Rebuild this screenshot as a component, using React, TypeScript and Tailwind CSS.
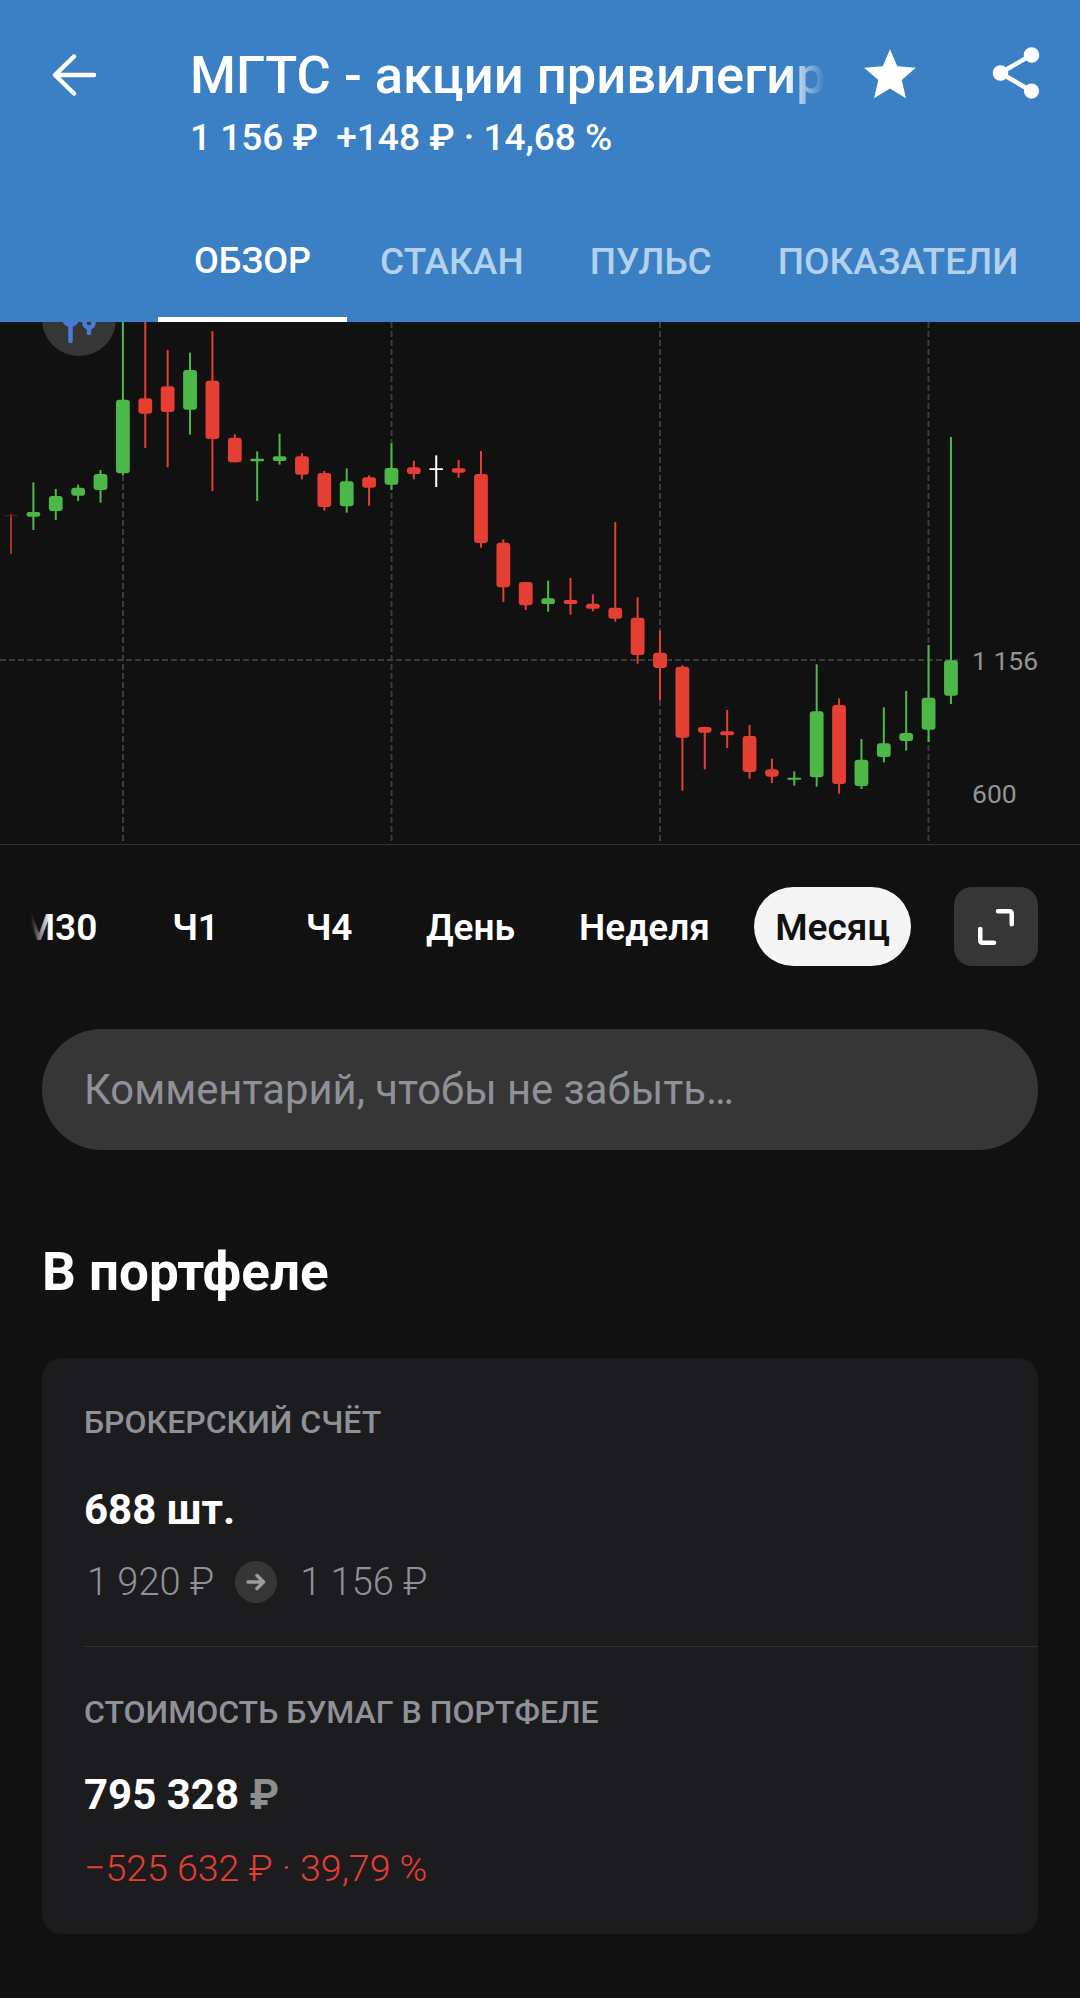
import { MdShare, MdStar } from "react-icons/md";

const R = "#E53E33";
const G = "#4CB848";
const W = "#FFFFFF";
const D = "#A8302A";

// [wick top, wick bottom, body top, body bottom, colour] in page pixels
const a = (z: number) => 310 + z / 3;
const b = (z: number) => 560 + z / 3;
const candles: [number, number, number, number, string][] = [
  [a(612), a(732), a(616), a(619), "#5A2320"],
  [a(517), a(660), a(606), a(620), G],
  [a(537), a(630), a(558), a(603), G],
  [a(524), a(573), a(533), a(557), G],
  [a(480), a(578), a(492), a(540), G],
  [a(30), a(495), a(269), a(490), G],
  [a(30), a(414), a(265), a(311), R],
  [a(120), a(472), a(229), a(306), R],
  [a(128), a(374), a(180), a(299), G],
  [a(64), a(543), a(212), a(387), R],
  [a(373), a(457), a(383), a(457), R],
  [a(424), a(573), a(446), a(454), G],
  [a(371), a(464), a(439), a(453), G],
  [a(430), a(508), a(439), a(494), R],
  [a(483), a(602), a(489), a(591), R],
  [a(475), a(608), a(514), a(589), G],
  [a(496), a(587), a(502), a(533), R],
  [a(400), a(540), a(474), a(524), G],
  [a(452), a(508), a(472), a(492), R],
  [a(436), a(531), a(475), a(480), W],
  [a(450), a(503), a(475), a(488), R],
  [a(423), a(713), a(492), a(699), R],
  [a(688), a(876), a(698), a(832), R],
  [a(816), b(150), a(816), b(136), R],
  [b(62), b(155), b(115), b(132), G],
  [b(54), b(164), b(120), b(132), R],
  [b(103), b(154), b(131), b(146), R],
  [b(-114), b(185), b(143), b(176), R],
  [b(112), b(311), b(173), b(285), R],
  [b(212), b(420), b(278), b(324), R],
  [b(316), b(692), b(320), b(533), R],
  [b(500), b(628), b(501), b(518), R],
  [b(450), b(564), b(514), b(526), R],
  [b(495), b(656), b(528), b(636), R],
  [b(596), b(669), b(628), b(650), R],
  [b(634), b(677), b(653), b(659), G],
  [b(313), b(680), b(454), b(652), G],
  [b(415), b(701), b(435), b(672), R],
  [b(537), b(687), b(599), b(678), G],
  [b(442), b(607), b(550), b(591), G],
  [b(393), b(572), b(519), b(543), G],
  [b(255), b(546), b(413), b(509), G],
  [b(-369), b(432), b(301), b(407), G],
];

const TOP = 322;

function Chart() {
  return (
    <div className="relative h-[523px] border-b border-[#333333]">
      <svg width="1080" height="522" viewBox="0 0 1080 522" className="block">
        {[123, 391.5, 660, 928.5].map((x) => (
          <line key={x} x1={x} x2={x} y1={0} y2={522} stroke="#3C3C3C" strokeWidth="2" strokeDasharray="6 3" />
        ))}
        <line x1={0} x2={958} y1={338} y2={338} stroke="#3C3C3C" strokeWidth="2" strokeDasharray="6 3" />
        <circle cx={79} cy={-3} r={37} fill="#363636" />
        <g stroke="#4A7BDC" strokeWidth="4.5" strokeLinecap="round" fill="none">
          <line x1={70.5} x2={70.5} y1={0} y2={19} />
          <circle cx={70.5} cy={-3} r={6} />
          <line x1={89} x2={89} y1={6} y2={11} />
          <circle cx={89} cy={1} r={4.5} />
        </g>
        {candles.map(([wt, wb, bt, bb, c], i) => {
          const x = 11 + i * 22.38;
          return (
            <g key={i}>
              <rect x={x - 1} y={wt - TOP} width={2} height={wb - wt} fill={i === 0 ? D : c} />
              <rect x={x - 6.9} y={bt - TOP} width={13.8} height={bb - bt} rx={bb - bt < 8 ? (bb - bt) / 2 : 3} fill={c} />
            </g>
          );
        })}
      </svg>
      <span className="absolute left-[972px] top-[322px] text-[26.5px] leading-[34px] text-[#949494]">1 156</span>
      <span className="absolute left-[972px] top-[455px] text-[26.5px] leading-[34px] text-[#949494]">600</span>
    </div>
  );
}

const frames = [
  { t: "М30", c: "w-[134px] pr-[14px]" },
  { t: "Ч1", c: "w-[123px]" },
  { t: "Ч4", c: "w-[144px]" },
  { t: "День", c: "w-[139px]" },
  { t: "Неделя", c: "w-[209px]" },
];

export default function App() {
  return (
    <div className="h-[1998px] w-[1080px] overflow-hidden bg-[#111111] font-['Roboto',sans-serif]">
      <header className="relative z-10 h-[322px] bg-[#3B7FC4] text-white">
        <div className="flex h-[163px] items-start">
          <div className="w-[190px] pl-[52px] pt-[54px]">
            <svg width="44" height="42" viewBox="0 0 44 42" fill="none" stroke="white" strokeWidth="4.5" strokeLinecap="round" strokeLinejoin="round">
              <path d="M42 21H4M22 2.500 3 21l19 18.500" />
            </svg>
          </div>
          <div className="w-[635px] pt-[44px]">
            <div className="relative overflow-hidden whitespace-nowrap text-[52.5px] font-medium leading-[62px]">
              МГТС - акции привилегир
              <div className="absolute inset-y-0 right-0 w-[40px] bg-linear-to-r from-transparent to-[#3B7FC4]" />
            </div>
            <div className="mt-[10px] whitespace-pre text-[37px] font-medium leading-[44px]">1 156 ₽  +148 ₽ · 14,68 %</div>
          </div>
          <div className="ml-[34px] pt-[44px]"><MdStar size={62} color="white" /></div>
          <div className="ml-[64px] pt-[42px]"><MdShare size={62} color="white" /></div>
        </div>
        <div className="ml-[158px] flex h-[159px] items-stretch pt-[65px] text-[37px] font-medium text-[#B3D0EC]">
          <div className="flex w-[189px] items-start justify-center border-b-[5px] border-white pt-[6px] text-[36px] text-white">ОБЗОР</div>
          <div className="px-[33px] pt-[6px]">СТАКАН</div>
          <div className="px-[33px] pt-[6px]">ПУЛЬС</div>
          <div className="px-[33px] pt-[6px]">ПОКАЗАТЕЛИ</div>
        </div>
      </header>

      <Chart />

      <div className="mt-[42px] flex h-[79px] items-stretch pr-[42px]">
        <div className="relative flex flex-1 overflow-hidden pt-[3px] text-[37px] font-semibold text-white">
          {frames.map((f) => (
            <div key={f.t} className={`flex items-center justify-center ${f.c}`}>{f.t}</div>
          ))}
          <div className="-mt-[3px] ml-[5px] flex w-[157px] items-center justify-center rounded-[40px] bg-[#F5F5F6] pt-[3px] text-[#111111]">Месяц</div>
          <div className="absolute inset-y-0 left-0 w-[50px] bg-linear-to-r from-[#111111] from-[62%] to-transparent" />
        </div>
        <div className="flex w-[84px] items-center justify-center rounded-[18px] bg-[#363636]">
          <svg width="44" height="44" viewBox="0 0 44 44" fill="none" stroke="white" strokeWidth="4.5" strokeLinecap="round" strokeLinejoin="round">
            <path d="M24 6.250h11.750a2 2 0 0 1 2 2v11M6.250 24v11.750a2 2 0 0 0 2 2H20" />
          </svg>
        </div>
      </div>

      <div className="mx-[42px] mt-[63px] flex h-[121px] items-center rounded-[60px] bg-[#363636] pl-[42px] pt-[2px] text-[41.8px] text-[#8F9199]">
        Комментарий, чтобы не забыть…
      </div>

      <h2 className="ml-[42px] mt-[90px] text-[53px] font-bold leading-[64px] text-white">В портфеле</h2>

      <section className="mx-[42px] mt-[54px] h-[576px] rounded-[20px] bg-[#1C1C1E] pl-[42px] pt-[44px]">
        <div className="text-[32px] font-medium leading-[40px] text-[#8F9199]">БРОКЕРСКИЙ СЧЁТ</div>
        <div className="mt-[43px] text-[42px] font-bold leading-[50px] text-white">688 шт.</div>
        <div className="mt-[25px] flex h-[44px] items-center text-[38px] font-light text-[#8F9199]">
          <span className="ml-[3px]">1 920 ₽</span>
          <span className="ml-[21px] flex h-[42px] w-[42px] items-center justify-center rounded-full bg-[#363636]">
            <svg width="22" height="22" viewBox="0 0 22 22" fill="none" stroke="#9A9CA3" strokeWidth="3.5" strokeLinecap="round" strokeLinejoin="round">
              <path d="M3 11h15M12 4.500 18.500 11 12 17.500" />
            </svg>
          </span>
          <span className="ml-[23px]">1 156 ₽</span>
        </div>
        <div className="mt-[42px] h-px bg-[#333333]" />
        <div className="mt-[45px] text-[32px] font-medium leading-[40px] text-[#8F9199]">СТОИМОСТЬ БУМАГ В ПОРТФЕЛЕ</div>
        <div className="mt-[38px] text-[42px] font-bold leading-[50px] text-white">
          795 328 <span className="text-[#8E8E8E]">₽</span>
        </div>
        <div className="mt-[25px] text-[37.5px] font-light leading-[46px] text-[#E53E33]">−525 632 ₽ · 39,79 %</div>
      </section>
    </div>
  );
}
